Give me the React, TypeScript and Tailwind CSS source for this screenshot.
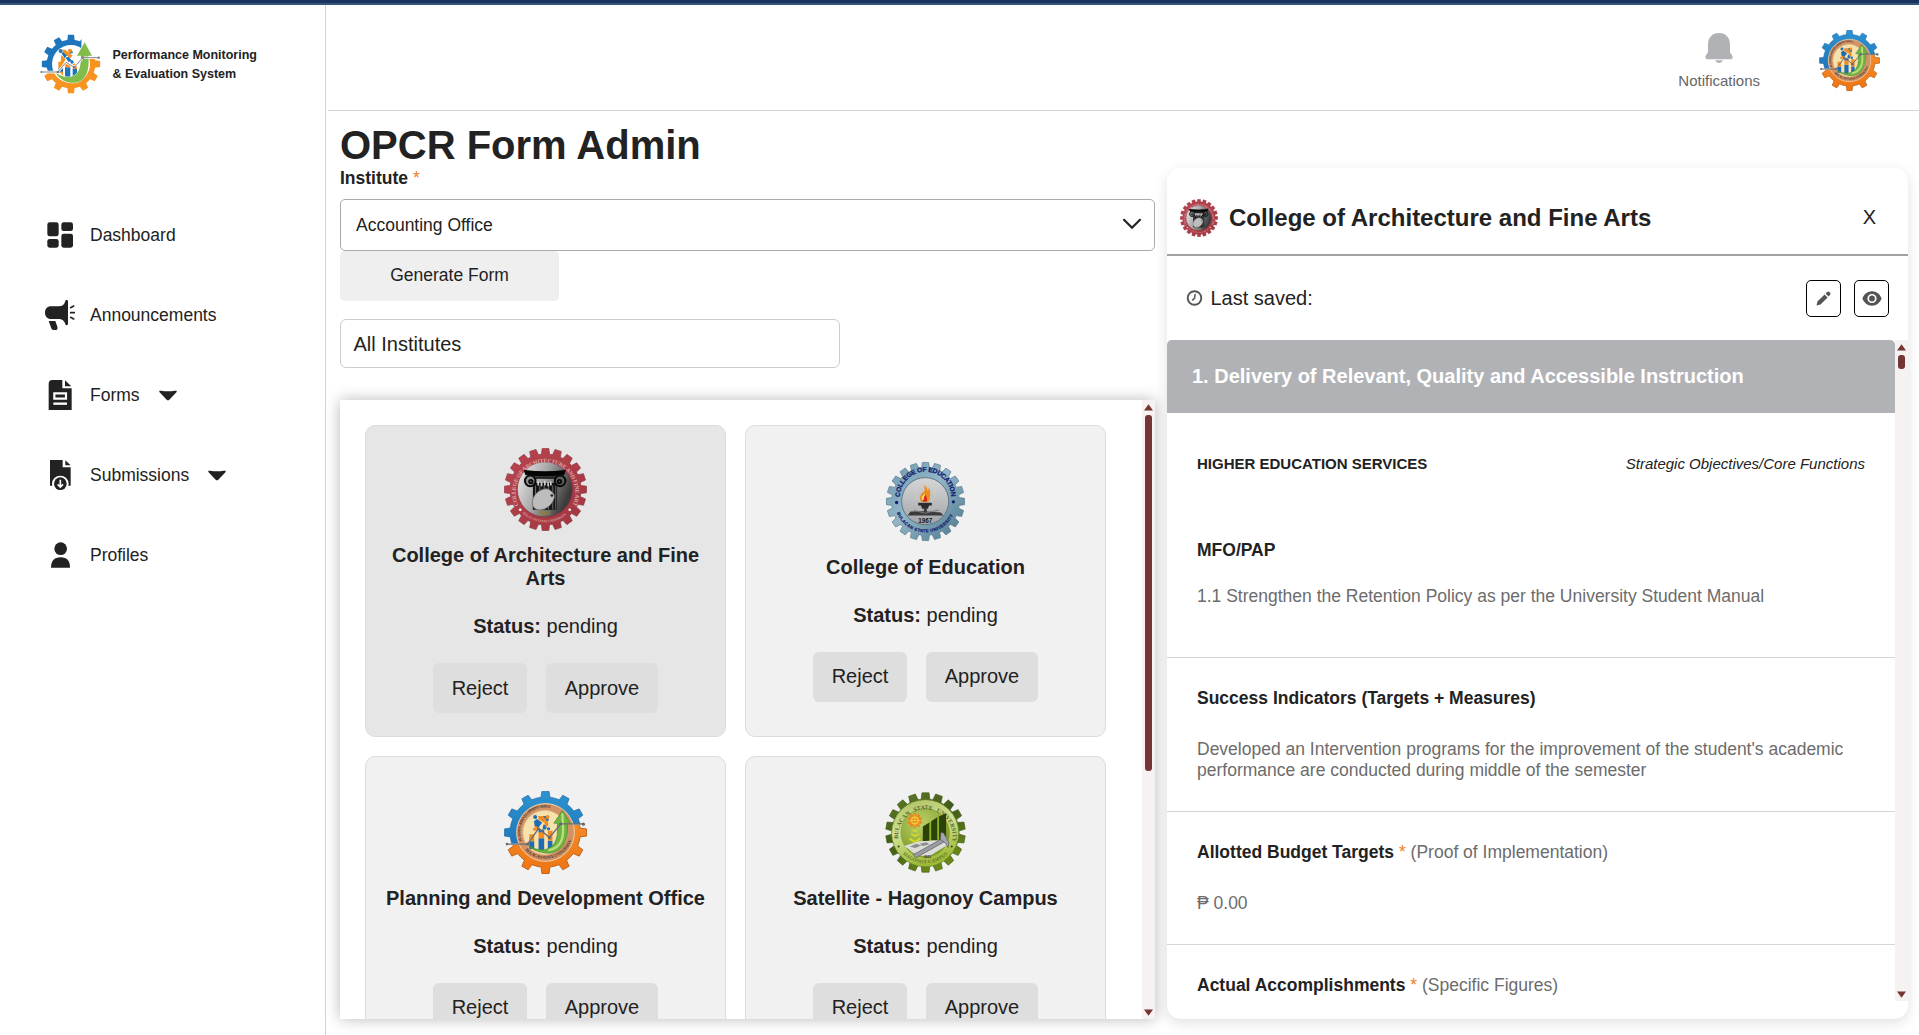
import React from "react";

/** Builds a cog outline centred on (cx, cy). */
function gear(cx: number, cy: number, outer: number, root: number, teeth: number, w = 0.26) {
  const step = (Math.PI * 2) / teeth;
  const pts: string[] = [];
  for (let i = 0; i < teeth; i++) {
    const a = -Math.PI / 2 + i * step;
    const add = (r: number, t: number) =>
      pts.push(`${(cx + r * Math.cos(t)).toFixed(1)} ${(cy + r * Math.sin(t)).toFixed(1)}`);
    add(root, a - step * w * 1.15);
    add(outer, a - step * w * 0.8);
    add(outer, a + step * w * 0.8);
    add(root, a + step * w * 1.15);
    add(root, a + step * 0.5);
  }
  return `M${pts.join("L")}Z`;
}

function CafaLogo({ className, id }: { className: string; id: string }) {
  return (
    <svg className={className} viewBox="73 55 250 250">
      <defs>
        <linearGradient id={`${id}g`} x1="0" y1="0" x2="1" y2="0.4">
          <stop offset="0" stopColor="#f0f0f0" />
          <stop offset="0.5" stopColor="#a9a9a9" />
          <stop offset="1" stopColor="#3c3c3c" />
        </linearGradient>
        <linearGradient id={`${id}r`} x1="0" y1="0" x2="1" y2="1">
          <stop offset="0" stopColor="#b94550" />
          <stop offset="1" stopColor="#a03640" />
        </linearGradient>
        <path id={`${id}a`} d="M117 228A90 90 0 1 1 279 228" />
        <path id={`${id}b`} d="M122 244A100 100 0 0 0 274 244" />
      </defs>
      <path d={gear(198, 180, 124, 107, 20, 0.32)} fill={`url(#${id}r)`} stroke="#8a3640" strokeWidth="2" />
      <circle cx="196" cy="180" r="83" fill={`url(#${id}g)`} stroke="#7d3038" strokeWidth="2" />
      <text fontSize="17" fill="#dfa9ae" fontFamily="Liberation Serif, serif" fontWeight="bold">
        <textPath href={`#${id}a`} textLength="372">COLLEGE OF ARCHITECTURE AND FINE ARTS</textPath>
      </text>
      <text fontSize="10.5" fill="#d9989e" fontFamily="Liberation Serif, serif" fontWeight="bold">
        <textPath href={`#${id}b`} startOffset="10" textLength="146">BULACAN STATE UNIVERSITY</textPath>
      </text>
      <circle cx="122" cy="241" r="4" fill="#fff" />
      <circle cx="271" cy="241" r="4" fill="#fff" />
      <path d="M160 160h73v81h-73z" fill="#151515" />
      <path d="M168 168v72M181 168v72M194 168v72M207 168v72M220 168v72M229 168v72" stroke="#6d6d6d" strokeWidth="3" />
      <path d="M135 123q61 8 122 0l-4 12q-57 7-114 0z" fill="#050505" stroke="#050505" strokeWidth="4" strokeLinejoin="round" />
      <path d="M150 140h94v8h-94z" fill="#222" />
      <g fill="none" stroke="#0a0a0a" strokeWidth="6">
        <circle cx="152" cy="154" r="16" fill="#8f8f8f" />
        <circle cx="242" cy="154" r="16" fill="#5c5c5c" />
        <circle cx="154" cy="156" r="5" />
        <circle cx="240" cy="156" r="5" />
      </g>
      <path d="M176 156v12M186 158v12M196 154v14M206 158v12M214 156v12" stroke="#d0d0d0" strokeWidth="5" />
      <path d="M160 230c-8-24 14-50 38-52 12-1 18 8 24 14 6 6 2 20-6 30-14 20-46 28-56 8z" fill="#bdbdbd" stroke="#666" strokeWidth="2" />
      <circle cx="217" cy="198" r="4" fill="#222" />
      <text x="196" y="256" textAnchor="middle" fontSize="15" fill="#9a8530" fontWeight="bold">1990</text>
    </svg>
  );
}

function EduLogo({ className }: { className: string }) {
  return (
    <svg className={className} viewBox="72 60 250 250">
      <defs>
        <linearGradient id="edur" x1="0" y1="0" x2="1" y2="1">
          <stop offset="0" stopColor="#6f98ae" />
          <stop offset="0.45" stopColor="#93b6c8" />
          <stop offset="1" stopColor="#477389" />
        </linearGradient>
        <linearGradient id="edug" x1="0" y1="0" x2="0" y2="1">
          <stop offset="0" stopColor="#d6d6d8" />
          <stop offset="1" stopColor="#a2a4a7" />
        </linearGradient>
        <path id="edua" d="M120 172A77 77 0 1 1 274 172" />
        <path id="edub" d="M109 215A93 93 0 0 0 285 215" />
      </defs>
      <path d={gear(197, 185, 118, 102, 20, 0.32)} fill="url(#edur)" stroke="#56798d" strokeWidth="2" />
      <circle cx="196" cy="184" r="71" fill="url(#edug)" stroke="#5f7683" strokeWidth="3" />
      <text fontSize="20" fill="#131d6e" fontFamily="Liberation Sans, sans-serif" fontWeight="900" stroke="#131d6e" strokeWidth="0.8">
        <textPath href="#edua" textLength="240">COLLEGE OF EDUCATION</textPath>
      </text>
      <text fontSize="13" fill="#131d6e" fontFamily="Liberation Sans, sans-serif" fontWeight="900" stroke="#131d6e" strokeWidth="0.6">
        <textPath href="#edub" startOffset="4" textLength="214">BULACAN STATE UNIVERSITY</textPath>
      </text>
      <circle cx="110" cy="188" r="5" fill="#131d6e" />
      <circle cx="281" cy="186" r="5" fill="#131d6e" />
      <circle cx="197" cy="160" r="30" fill="none" stroke="#d8d2bb" strokeWidth="2" />
      <path d="M184 186c-8-14 0-24 8-30 5-5 2-14 0-20 10 4 11 12 11 18 3-4 4-8 4-12 7 16 5 34-2 44z" fill="#f08a1c" />
      <path d="M190 186c-4-10 3-16 7-22 2 8 8 12 3 22z" fill="#d92a1b" />
      <path d="M187 180c-3-10 4-14 8-20 1 8-4 10-3 20z" fill="#ffe27a" />
      <path d="M175 189h41v8h-8l-4 10h-17l-4-10h-8z" fill="#2c2c2c" />
      <path d="M192 205h9v10l42 3 8 9h-108l9-12 40-1z" fill="#3b3b3b" />
      <path d="M162 212l34 8 40-9" fill="none" stroke="#777" strokeWidth="3" />
      <text x="196" y="251" textAnchor="middle" fontSize="19" fill="#161616" fontFamily="Liberation Sans, sans-serif" fontWeight="900">1967</text>
    </svg>
  );
}

function PlanningLogo({ className, id }: { className: string; id: string }) {
  return (
    <svg className={className} viewBox="71 64 250 250">
      <defs>
        <linearGradient id={`${id}bl`} x1="0" y1="0" x2="0" y2="1">
          <stop offset="0" stopColor="#2d93d1" />
          <stop offset="1" stopColor="#1767ad" />
        </linearGradient>
        <linearGradient id={`${id}or`} x1="0" y1="0" x2="0" y2="1">
          <stop offset="0" stopColor="#f69a38" />
          <stop offset="1" stopColor="#ef7412" />
        </linearGradient>
        <clipPath id={`${id}t`}><path d="M60 50h280v115h-94l-50 58h-136z" /></clipPath>
        <clipPath id={`${id}u`}><path d="M60 330v-104h136l50-60h94v164z" /></clipPath>
        <path id={`${id}a`} d="M125 214A74 74 0 0 1 243 132" />
        <path id={`${id}b`} d="M134 242A84 84 0 0 0 279 190" />
      </defs>
      <g clipPath={`url(#${id}t)`}>
        <path d={gear(196, 189, 124, 107, 12, 0.21)} fill={`url(#${id}bl)`} stroke="#1a68a3" strokeWidth="2" />
      </g>
      <g clipPath={`url(#${id}u)`}>
        <path d={gear(196, 189, 124, 105, 12, 0.21)} fill={`url(#${id}or)`} stroke="#b5560f" strokeWidth="2.5" />
      </g>
      <circle cx="196" cy="189" r="87" fill="#d39266" stroke="#f0cfa4" strokeWidth="3" />
      <circle cx="194" cy="189" r="66" fill="#f5e2ae" stroke="#ecc68e" strokeWidth="3" />
      <text fontSize="11.5" fill="#50362c" fontFamily="Liberation Serif, serif" fontWeight="bold">
        <textPath href={`#${id}a`} textLength="160">PLANNING &amp; DEVELOPMENT OFFICE</textPath>
      </text>
      <text fontSize="13" fill="#50362c" fontFamily="Liberation Serif, serif" fontWeight="bold">
        <textPath href={`#${id}b`} textLength="172">BULACAN STATE UNIVERSITY</textPath>
      </text>
      <g fill="#1e6cb5">
        <path d="M147 215h15v24h-15zM175 206h17v40h-17zM203 214h14v30h-14zM175 180h17v10h-17z" />
        <path d="M161 155l10-7 15 12-12 15-10-4zM188 139h11l8 12-8 6zM190 165l12 2-6 14-9-4z" />
        <circle cx="165" cy="142" r="6" />
        <circle cx="205" cy="178" r="5" />
      </g>
      <g fill="#f28b21">
        <path d="M147 194h15v21h-15zM175 188h17v18h-17zM203 184h14v30h-14z" />
        <path d="M174 139h13l12 11-8 9-16-10zM192 157l11-5 2 15-9 6zM162 168l12 5 6 8-12 2z" />
        <circle cx="202" cy="142" r="6" />
        <circle cx="163" cy="179" r="5" />
      </g>
      <path d="M144 229c42 24 84 13 88-38v-30h-11l26-38 24 38h-9c4 66-28 99-76 88-18-4-30-9-42-20z" fill="#6fb440" stroke="#3f8a2a" strokeWidth="2" />
      <path d="M247 132l2 50c0 34-16 55-44 60" fill="none" stroke="#b9de80" strokeWidth="7" />
      <path d="M77 224h65l33-47 33 27 34-41h69" fill="none" stroke="#6d6d72" strokeWidth="4" />
      <g fill="#686870">
        <circle cx="80" cy="224" r="4" />
        <circle cx="142" cy="224" r="5" />
        <circle cx="175" cy="177" r="4" />
        <circle cx="208" cy="204" r="5" />
        <circle cx="242" cy="163" r="5" />
        <circle cx="310" cy="164" r="5" />
      </g>
    </svg>
  );
}

function HagonoyLogo({ className }: { className: string }) {
  return (
    <svg className={className} viewBox="72 63 250 250">
      <defs>
        <linearGradient id="hagr" x1="0" y1="0" x2="0.6" y2="1">
          <stop offset="0" stopColor="#64802a" />
          <stop offset="0.5" stopColor="#40591a" />
          <stop offset="1" stopColor="#6b8a18" />
        </linearGradient>
        <linearGradient id="hagm" x1="0" y1="0" x2="0.3" y2="1">
          <stop offset="0" stopColor="#a9bd5e" />
          <stop offset="0.5" stopColor="#d3e294" />
          <stop offset="1" stopColor="#9dba38" />
        </linearGradient>
        <radialGradient id="hagi" cx="0.4" cy="0.3" r="0.8">
          <stop offset="0" stopColor="#bcd16c" />
          <stop offset="1" stopColor="#73921a" />
        </radialGradient>
        <path id="haga" d="M116 213A82 82 0 1 1 278 213" />
        <path id="hagb" d="M122 245A95 95 0 0 0 276 238" />
      </defs>
      <path d={gear(197, 188, 120, 101, 18, 0.32)} fill="url(#hagr)" stroke="#455d17" strokeWidth="2" />
      <circle cx="196" cy="190" r="101" fill="url(#hagm)" stroke="#6b8428" strokeWidth="2" />
      <circle cx="196" cy="189" r="73" fill="url(#hagi)" stroke="#7f9b2c" strokeWidth="2" />
      <text fontSize="18" fill="#566625" fontFamily="Liberation Serif, serif" fontWeight="bold">
        <textPath href="#haga" startOffset="6" textLength="280" wordSpacing="8">BULACAN STATE UNIVERSITY</textPath>
      </text>
      <text fontSize="15" fill="#66782a" fontFamily="Liberation Serif, serif" fontWeight="bold">
        <textPath href="#hagb" startOffset="10" textLength="150">HAGONOY CAMPUS</textPath>
      </text>
      <circle cx="116" cy="230" r="3" fill="#33401a" />
      <circle cx="276" cy="230" r="3" fill="#33401a" />
      <path d="M189 170l22-14v58h-22zM214 154l20-13v70h-20zM237 140l22-10v72l-22 9z" fill="#2d4208" />
      <path d="M211 156v58M235 142v68" stroke="#8cb81c" strokeWidth="5" />
      <path d={gear(165, 152, 23, 18, 10, 0.28)} fill="#e88a22" />
      <circle cx="165" cy="152" r="10" fill="none" stroke="#f3c63a" strokeWidth="4" />
      <path d="M165 136v32M149 152h32" stroke="#f3c63a" strokeWidth="3" />
      <g fill="none" stroke="#d8dc25" strokeWidth="4">
        <path d="M158 180l7 5 8-5" />
        <path d="M154 192l11 7 12-7" />
        <path d="M149 206l16 11 17-11" strokeWidth="6" />
      </g>
      <path d="M132 229l46-15 64-3 26 12-58 36q-44 3-62-20z" fill="#dcdcd8" />
      <path d="M150 230l20-8 14 5-18 8zM180 222l20-5 8 7-20 5z" fill="#8a8d88" />
      <path d="M160 255l86-48 6 10-84 47z" fill="#9b9ca3" stroke="#55565c" strokeWidth="2" />
      <path d="M244 187l8 3 15 27-2 16-7-12-17-13z" fill="#a4a5ae" stroke="#55565c" strokeWidth="2" />
      <text x="203" y="265" textAnchor="middle" fontSize="10" fill="#222" fontWeight="bold">2011</text>
    </svg>
  );
}

function BrandLogo() {
  return (
    <svg className="-mt-px h-[62px] w-[61px] shrink-0" viewBox="120 100 183 186">
      <defs>
        <clipPath id="brt"><path d="M110 90h135v60l-60 65h-75z" /></clipPath>
        <clipPath id="bro"><path d="M110 300v-79h75l60-43h70v122z" /></clipPath>
        <mask id="brm">
          <rect x="100" y="80" width="220" height="220" fill="#fff" />
          <circle cx="213" cy="193" r="57" fill="#000" />
        </mask>
      </defs>
      <g mask="url(#brm)">
        <path clipPath="url(#brt)" d={gear(213, 193, 88, 73, 12, 0.25)} fill="#1d75bd" />
        <path clipPath="url(#bro)" d={gear(213, 193, 88, 73, 12, 0.25)} fill="#f7931e" />
      </g>
      <g fill="#1d75bd">
        <path d="M175 206h14v12h-14zM195 203h16v34h-16zM218 208h13v28h-13z" />
        <path d="M184 160l8-4 12 8-10 12zM203 150h12l4 10-9 2zM196 174l10-3 10 12-10 4z" />
        <circle cx="182" cy="154" r="6" />
        <circle cx="216" cy="187" r="5" />
      </g>
      <g fill="#f7931e">
        <path d="M175 186h14v20h-14zM195 190h16v13h-16zM218 192h13v16h-13zM178 216h11v12z" />
        <path d="M186 150h10l22 18-8 8-18-16zM184 166l12 12-4 12-10-4z" />
        <circle cx="210" cy="153" r="6" />
      </g>
      <path
        d="M168 220c38 24 72 14 74-35l1-17h-12l23-40 22 40h-11c6 64-20 85-54 81-20-2-35-15-43-29z"
        fill="#80bd4b"
        stroke="#fff"
        strokeWidth="3"
        paintOrder="stroke"
      />
      <path d="M123 217h51l24-29 25 15 25-29h49" fill="none" stroke="#fff" strokeWidth="7" />
      <path d="M123 217h51l24-29 25 15 25-29h49" fill="none" stroke="#858585" strokeWidth="3" />
      <g fill="#777">
        <circle cx="124" cy="217" r="3" />
        <circle cx="174" cy="217" r="4" />
        <circle cx="223" cy="203" r="4" />
        <circle cx="248" cy="174" r="4" />
        <circle cx="296" cy="174" r="3.5" />
      </g>
    </svg>
  );
}

const DashboardIcon = () => (
  <svg className="h-[30px] w-[30px]" viewBox="0 0 90 90" fill="#222">
    <rect x="7" y="7" width="34" height="42" rx="7" />
    <rect x="49" y="7" width="35" height="26" rx="7" />
    <rect x="7" y="57" width="34" height="26" rx="7" />
    <rect x="49" y="41" width="35" height="42" rx="7" />
  </svg>
);

const MegaphoneIcon = () => (
  <svg className="h-[30px] w-[30px]" viewBox="0 0 90 90" fill="#222">
    <path d="M18 19h24c9 0 16-5 18-13 1-5 3-6 5-6 3 0 4 2 4 5v65c0 4-1 6-4 6s-4-2-5-6c-2-8-9-13-18-13H18C7 57 0 49 0 38s7-19 18-19z" />
    <path d="M11 63h20l6 17c2 7-1 10-6 10h-5c-4 0-6-2-7-5z" />
    <path d="M77 23l9-5M77 38h11M77 52l9 5" stroke="#222" strokeWidth="5" strokeLinecap="round" />
  </svg>
);

const FormIcon = () => (
  <svg className="h-[30px] w-[30px]" viewBox="0 0 90 90">
    <path d="M11 12Q11 0 22 0h30v25h28v65H11z" fill="#222" />
    <path d="M60 1l19 18H60z" fill="#222" />
    <path d="M28 40h35v16H28z" fill="none" stroke="#fff" strokeWidth="6.5" />
    <path d="M25 71h41" stroke="#fff" strokeWidth="7" />
  </svg>
);

const SubmissionIcon = () => (
  <svg className="h-[30px] w-[30px]" viewBox="0 0 90 90">
    <path d="M15 0h38v22h24v55H15z" fill="#222" />
    <path d="M61 1l16 15H61z" fill="#222" />
    <circle cx="46" cy="72" r="25" fill="#fff" />
    <circle cx="46" cy="71" r="19" fill="#222" />
    <path d="M46 59v21M38 73l8 8 8-8" fill="none" stroke="#fff" strokeWidth="5" />
  </svg>
);

const ProfileIcon = () => (
  <svg className="h-[30px] w-[30px]" viewBox="0 0 90 90" fill="#222">
    <circle cx="47" cy="26" r="19" />
    <path d="M18 83c0-19 9-31 29-31s28 12 28 31z" />
  </svg>
);

const Caret = () => (
  <svg className="h-[11px] w-[18px]" viewBox="0 0 54 33" fill="#222">
    <path d="M1 2h6q20 4 40 0h6v4L31 29q-4 3-8 0L1 6z" />
  </svg>
);

const nav = [
  { label: "Dashboard", icon: <DashboardIcon /> },
  { label: "Announcements", icon: <MegaphoneIcon /> },
  { label: "Forms", icon: <FormIcon />, caret: true },
  { label: "Submissions", icon: <SubmissionIcon />, caret: true },
  { label: "Profiles", icon: <ProfileIcon /> },
];

const offices = [
  { name: "College of Architecture and Fine Arts", logo: <CafaLogo className="-mt-px h-[83px] w-[83px]" id="c1" />, active: true },
  { name: "College of Education", logo: <EduLogo className="-mt-px h-[83px] w-[83px]" /> },
  { name: "Planning and Development Office", logo: <PlanningLogo className="-mt-px h-[83px] w-[83px]" id="p1" /> },
  { name: "Satellite - Hagonoy Campus", logo: <HagonoyLogo className="-mt-px h-[83px] w-[83px]" /> },
];

function ScrollArrow({ down = false }: { down?: boolean }) {
  return (
    <svg className={down ? "h-[7px] w-[9px] rotate-180" : "h-[7px] w-[9px]"} viewBox="0 0 9 7" fill="#763535">
      <path d="M4.5 0.2L9 6.5H0z" />
    </svg>
  );
}

function Scrollbar({ thumb }: { thumb: string }) {
  return (
    <div className="flex w-[13px] shrink-0 flex-col items-center bg-[#f6f2f2] pt-1 pb-[3px]">
      <ScrollArrow />
      <div className={`mt-1 w-[7px] rounded-[3px] bg-[#763535] ${thumb}`} />
      <div className="mt-auto flex">
        <ScrollArrow down />
      </div>
    </div>
  );
}

function Star() {
  return <span className="font-normal text-[#f0811f]">*</span>;
}

export default function App() {
  return (
    <div className="flex h-[1035px] w-[1919px] flex-col overflow-hidden bg-white font-['Liberation_Sans',Arial,sans-serif] text-[17.5px] text-[#222]">
      <div className="h-[5px] shrink-0 border-b-2 border-[#33547c] bg-[#19335f]" />
      <div className="flex min-h-0 flex-1">
        <aside className="flex w-[326px] shrink-0 flex-col border-r border-[#d4d4d6]">
          <div className="flex h-[119px] items-center pl-10">
            <BrandLogo />
            <p className="ml-[11.5px] text-[12.5px] leading-[19px] font-bold whitespace-nowrap">
              Performance Monitoring
              <br />
              &amp; Evaluation System
            </p>
          </div>
          <nav className="mt-[71px] flex flex-col">
            {nav.map((item) => (
              <a key={item.label} className="flex h-20 items-center pl-[45px]">
                {item.icon}
                <span className="ml-[15px] leading-5">{item.label}</span>
                {item.caret && (
                  <span className="ml-[19px] flex">
                    <Caret />
                  </span>
                )}
              </a>
            ))}
          </nav>
        </aside>

        <div className="flex min-w-0 flex-1 flex-col">
          <header className="ml-0.5 flex h-[106px] shrink-0 items-center justify-end border-b border-[#d4d4d6] pt-[5px] pr-[39px]">
            <div className="mr-[59px] flex flex-col items-center pt-[3px]">
              <svg className="h-[30px] w-[28px]" viewBox="0 0 84 90" fill="#b1b2b6">
                <path d="M42 0C22 0 9 14 9 34v22c0 6-8 9-8 16 0 4 3 7 8 7h66c5 0 8-3 8-7 0-7-8-10-8-16V34C75 14 62 0 42 0zM30 82h24c-3 5-7 8-12 8s-9-3-12-8z" />
              </svg>
              <span className="mt-2 text-[15px] leading-5 text-[#666]">Notifications</span>
            </div>
            <PlanningLogo className="h-[61px] w-[61px]" id="p2" />
          </header>

          <main className="flex min-h-0 flex-1 pl-[14px]">
            <section className="mr-3 flex w-[815px] shrink-0 flex-col">
              <h1 className="mt-[11px] text-[40px] leading-[46px] font-bold">OPCR Form Admin</h1>
              <label className="leading-5 font-bold">
                Institute <Star />
              </label>
              <div className="mt-[11px] flex h-[52px] shrink-0 items-center justify-between rounded-[5px] border border-[#a9aaae] pr-3 pl-[15px]">
                <span className="leading-5">Accounting Office</span>
                <svg className="h-[12px] w-[20px] -translate-y-px" viewBox="0 0 20 12" fill="none" stroke="#222" strokeWidth="2.2" strokeLinecap="round" strokeLinejoin="round">
                  <path d="M2 1.8l8 8 8-8" />
                </svg>
              </div>
              <button className="h-[50px] w-[219px] shrink-0 rounded-[5px] bg-[#efefef] pb-[2px]">Generate Form</button>
              <div className="mt-[18px] flex h-[49px] w-[500px] shrink-0 items-center rounded-[6px] border border-[#ccc] pl-[12.5px] text-[20px]">
                All Institutes
              </div>

              <div className="mt-8 flex h-[619px] shrink-0 bg-white shadow-[0_0_14px_rgba(0,0,0,0.28)]">
                <div className="grid flex-1 grid-cols-[361px_361px] content-start gap-[19px] overflow-hidden pt-[25px] pl-[25px]">
                  {offices.map((o) => (
                    <article
                      key={o.name}
                      className={`flex h-[312px] flex-col items-center justify-center rounded-[10px] border border-[#dcdcdd] px-4 text-center text-[20px] leading-[23px] ${
                        o.active ? "bg-[#e6e6e6]" : "bg-[#f1f1f1]"
                      }`}
                    >
                      {o.logo}
                      <h2 className="mt-[13px] font-bold">{o.name}</h2>
                      <p className="mt-[25px]">
                        <b>Status:</b> pending
                      </p>
                      <div className="mt-[25px] flex gap-[19px]">
                        <button className="h-[50px] w-[94px] rounded-[6px] bg-[#dedede]">Reject</button>
                        <button className="h-[50px] w-[112px] rounded-[6px] bg-[#dedede]">Approve</button>
                      </div>
                    </article>
                  ))}
                </div>
                <Scrollbar thumb="h-[356px]" />
              </div>
            </section>

            <section className="mt-[57px] flex h-[851px] w-[741px] flex-col rounded-[14px] bg-white shadow-[0_4px_14px_rgba(0,0,0,0.12)]">
              <div className="flex h-[88px] shrink-0 items-center border-b-2 border-[#a0a1a3] pt-[13px] pr-8 pl-[13px]">
                <CafaLogo className="h-[38px] w-[38px]" id="c2" />
                <h2 className="ml-[11px] pt-px text-[24px] leading-7 font-bold">College of Architecture and Fine Arts</h2>
                <span className="ml-auto pb-px text-[20px] leading-6">X</span>
              </div>
              <div className="flex h-[84px] shrink-0 items-center pr-[19px] pl-[19px]">
                <svg className="h-4 w-[17px]" viewBox="0 0 16 16" fill="none" stroke="#555" strokeWidth="1.9" strokeLinecap="round">
                  <circle cx="8" cy="8" r="6.8" />
                  <path d="M8.6 4.6L8 8.3l-1.8 1.6" strokeWidth="1.5" />
                </svg>
                <span className="ml-[7.5px] text-[20px] leading-6">Last saved:</span>
                <button className="ml-auto flex h-[37px] w-[35px] items-center justify-center rounded-[5px] border border-black">
                  <svg className="h-[15px] w-[15px]" viewBox="0 0 16 16" fill="#555">
                    <path d="M0.6 15.4l0.9-4.2 7.6-7.6 3.3 3.3-7.6 7.6zM10.2 2.6l1.6-1.6q1.4-1.2 2.8 0.3 1.5 1.5 0.3 2.9l-1.5 1.6z" />
                  </svg>
                </button>
                <button className="ml-[13px] flex h-[37px] w-[35px] items-center justify-center rounded-[5px] border border-black">
                  <svg className="h-[15px] w-[20px]" viewBox="0 0 20 15" fill="#555">
                    <path fillRule="evenodd" d="M10 0.3c4.6 0 8 3 9.6 7.2-1.6 4.2-5 7.2-9.6 7.2S2 11.7 0.4 7.5C2 3.3 5.4 0.3 10 0.3zM10 2.9a4.6 4.6 0 1 0 0 9.2 4.6 4.6 0 0 0 0-9.2z" />
                    <circle cx="10" cy="7.5" r="2.9" />
                  </svg>
                </button>
              </div>
              <div className="flex h-[661px] shrink-0">
                <div className="min-w-0 flex-1">
                  <h3 className="flex h-[73px] items-center rounded-t-[5px] bg-[#b1b2b6] pb-[2px] pl-[25px] text-[20px] font-bold text-white">
                    1. Delivery of Relevant, Quality and Accessible Instruction
                  </h3>
                  <div className="h-[245px] border-b border-[#d4d5d8] px-[30px] pt-[41px]">
                    <div className="flex justify-between text-[15px] leading-5">
                      <b>HIGHER EDUCATION SERVICES</b>
                      <i>Strategic Objectives/Core Functions</i>
                    </div>
                    <h4 className="mt-[66px] leading-5 font-bold">MFO/PAP</h4>
                    <p className="mt-[26px] leading-5 text-[#6c6c6c]">
                      1.1 Strengthen the Retention Policy as per the University Student Manual
                    </p>
                  </div>
                  <div className="h-[154px] border-b border-[#d4d5d8] px-[30px] pt-[30px]">
                    <h4 className="leading-5 font-bold">Success Indicators (Targets + Measures)</h4>
                    <p className="mt-[31px] leading-[21px] text-[#6c6c6c]">
                      Developed an Intervention programs for the improvement of the student's academic performance are
                      conducted during middle of the semester
                    </p>
                  </div>
                  <div className="h-[133px] border-b border-[#d4d5d8] px-[30px] pt-[30px]">
                    <h4 className="leading-5 font-bold">
                      Allotted Budget Targets <Star /> <span className="font-normal text-[#6c6c6c]">(Proof of Implementation)</span>
                    </h4>
                    <p className="mt-[31px] leading-[21px] text-[#6c6c6c]">₱ 0.00</p>
                  </div>
                  <h4 className="px-[30px] pt-[30px] leading-5 font-bold">
                    Actual Accomplishments <Star /> <span className="font-normal text-[#6c6c6c]">(Specific Figures)</span>
                  </h4>
                </div>
                <Scrollbar thumb="h-[14px]" />
              </div>
            </section>
          </main>
        </div>
      </div>
    </div>
  );
}
